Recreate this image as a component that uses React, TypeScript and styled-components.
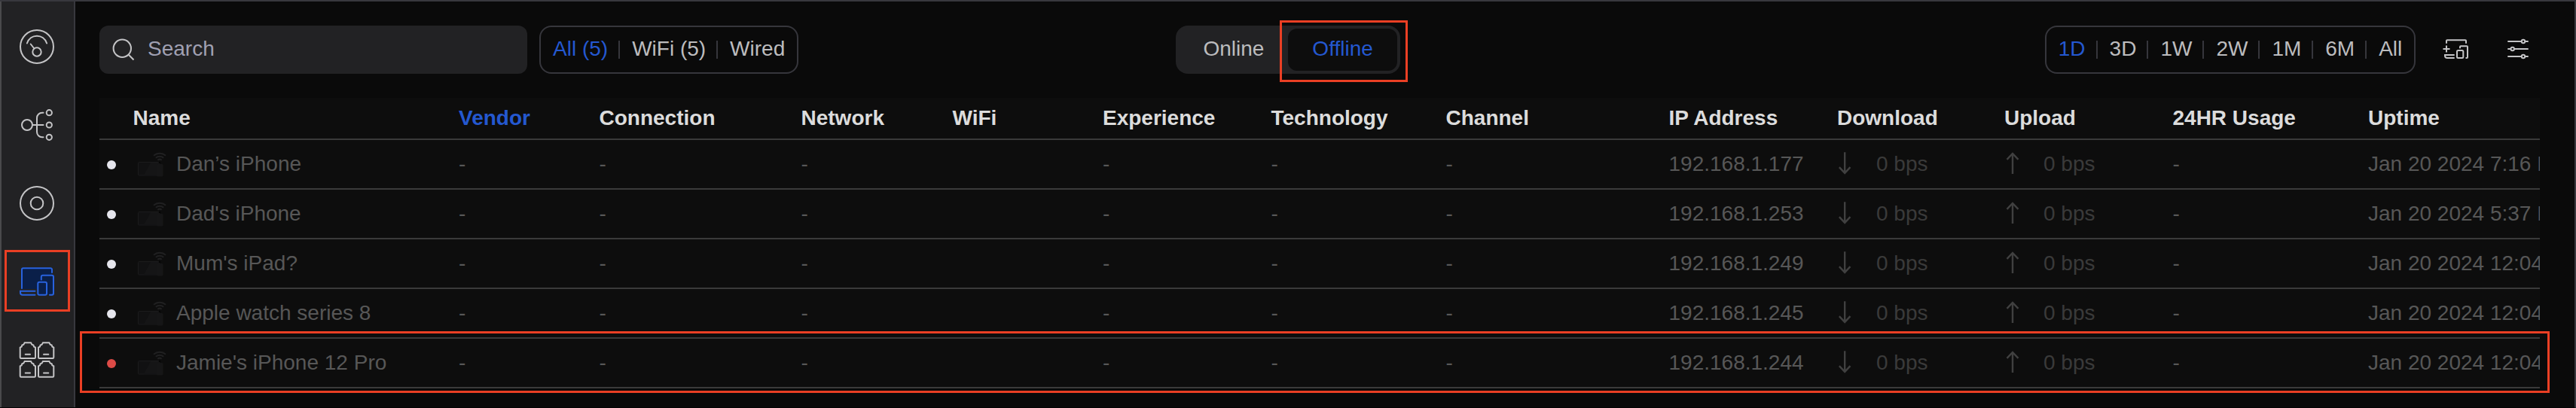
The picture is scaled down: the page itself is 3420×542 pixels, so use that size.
import React from "react";
import styled, { createGlobalStyle, css } from "styled-components";

const GlobalStyle = createGlobalStyle`
  * { box-sizing: border-box; }
  body { margin: 0; background: #0a0a0a; }
`;

const Page = styled.div`
  position: relative;
  display: flex;
  width: 3420px;
  height: 542px;
  overflow: hidden;
  background: #0a0a0a;
  border-top: 2px solid #38383e;
  border-right: 2px solid #38383e;
  border-bottom: 1px solid #040404;
  font-family: "Liberation Sans", Arial, sans-serif;
  font-size: 28px;
  line-height: 32px;
  color: #bcbcbe;
`;

const Sidebar = styled.nav`
  display: flex;
  flex-direction: column;
  align-items: center;
  gap: 56px;
  width: 100px;
  height: 541px;
  margin-top: -2px;
  padding: 36px 2px 0 0;
  flex: none;
  background: #222224;
  border-top: 2px solid #143181;
  border-left: 2px solid #4a4a4c;
  border-right: 2px solid #38383e;
`;

const NavIcon = styled.svg<{ $active?: boolean }>`
  display: block;
  flex: none;
  width: 48px;
  height: 48px;
  fill: none;
  stroke: ${(p) => (p.$active ? "#2862de" : "#c4c4c6")};
  stroke-width: 2;
  stroke-linecap: round;
`;

const Main = styled.main`
  flex: 1;
  min-width: 0;
  padding: 32px 46px 0 32px;
`;

const Toolbar = styled.div`
  display: flex;
  align-items: center;
  height: 64px;
  margin-bottom: 32px;
`;

const SearchBox = styled.div`
  display: flex;
  align-items: center;
  width: 568px;
  height: 64px;
  padding-left: 16px;
  gap: 16px;
  border-radius: 12px;
  background: #222224;
  color: #a0a0b2;
`;

const SearchLabel = styled.span`
  padding-bottom: 2px;
`;

const ToolIcon = styled.svg`
  display: block;
  flex: none;
  fill: none;
  stroke: #c4c4c6;
  stroke-width: 2;
`;

const OptionGroup = styled.div<{ $gapLeft: number }>`
  display: flex;
  align-items: center;
  height: 64px;
  margin-left: ${(p) => p.$gapLeft}px;
  padding: 0 16px;
  border: 2px solid #36363c;
  border-radius: 16px;
`;

const Option = styled.span<{ $active?: boolean }>`
  padding-bottom: 2px;
  white-space: nowrap;
  color: ${(p) => (p.$active ? "#2458d0" : "#bcbcbe")};
`;

const Divider = styled.i`
  width: 2px;
  height: 24px;
  margin: 0 16px 0 14px;
  background: #36363c;
`;

const Segmented = styled.div`
  display: flex;
  height: 64px;
  margin-left: 501.2px;
  padding: 4px;
  border-radius: 16px;
  background: #222224;
`;

const Segment = styled.span<{ $active?: boolean }>`
  padding: 11px 32px 13px;
  border-radius: 12px;
  ${(p) =>
    p.$active &&
    css`
      background: #0d0d0d;
      color: #2458d0;
    `}
`;

const ToolActions = styled.div`
  display: flex;
  align-items: center;
  gap: 48px;
  margin-left: 34px;
`;

const Table = styled.div`
  width: 3240px;
  overflow: hidden;
  background: #0d0d0d;
`;

const columns = css`
  display: grid;
  align-items: center;
  grid-template-columns:
    44.5px 432.5px 186.5px 268px 201px 199.5px 223.5px 232px 296px 223.5px 222px
    223.5px 259.5px 400px;
  white-space: nowrap;
  border-bottom: 2px solid #3a3a3a;
`;

const HeadRow = styled.div`
  ${columns}
  width: 3240px;
  height: 56px;
  font-weight: 700;
  color: #dcdcdc;
`;

const HeadCell = styled.span<{ $sorted?: boolean }>`
  color: ${(p) => (p.$sorted ? "#2458d0" : "inherit")};
`;

const Row = styled.div`
  ${columns}
  width: 3240px;
  height: 66px;
  color: #575757;
`;

const StatusDot = styled.i<{ $blocked?: boolean }>`
  width: 12px;
  height: 12px;
  margin: 2px 0 0 10px;
  border-radius: 50%;
  background: ${(p) => (p.$blocked ? "#dd4b47" : "#e6e6ed")};
`;

const NameCell = styled.div`
  display: flex;
  align-items: center;
  padding-left: 4.5px;
  gap: 13px;
`;

const RateCell = styled.div`
  display: flex;
  align-items: center;
  gap: 30px;
  color: #3a3a3a;
`;

const Highlight = styled.div<{ $x: number; $y: number; $w: number; $h: number }>`
  position: absolute;
  left: ${(p) => p.$x}px;
  top: ${(p) => p.$y - 2}px;
  width: ${(p) => p.$w}px;
  height: ${(p) => p.$h}px;
  border: 3px solid #ea3f24;
`;

const port =
  "M1 7.300L3 6.200L3.600 4.200L5.600 3.400L7 1H15.300L16.700 3.400L18.700 4.200L19.300 6.200L21.300 7.300V20.500a1.200 1.200 0 0 1-1.200 1.200H2.200A1.200 1.200 0 0 1 1 20.500zM8 16.500h6.300";

function DeviceArt() {
  return (
    <svg width="40" height="36" viewBox="0 0 40 36" fill="none">
      <rect x="2.500" y="15.500" width="28" height="17.500" rx="1" fill="#111112" stroke="#1b1b1c" />
      <path d="M19 16h11v16.500H10z" fill="#151516" />
      <rect x="27" y="18" width="8.500" height="16.500" rx="1.500" fill="#161617" />
      <g stroke="#202021" strokeWidth="2">
        <path d="M23 6.800c4.500-4.200 11.500-4.200 16 0M25.800 9.800c3-2.700 7.400-2.700 10.400 0M28.300 12.700c1.600-1.300 3.800-1.300 5.400 0" />
      </g>
      <circle cx="31" cy="16" r="1.200" fill="#060606" />
    </svg>
  );
}

function Arrow({ up }: { up?: boolean }) {
  return (
    <svg width="22" height="32" viewBox="0 0 22 32" fill="none" stroke="#404040" strokeWidth="2.400">
      {up ? (
        <path d="M11 29V2M3.500 9.800L11 2l7.500 7.800" />
      ) : (
        <path d="M10.200 .3v27.500M2.900 20.200l7.300 7.700 7.300-7.700" />
      )}
    </svg>
  );
}

function Options({ items, gapLeft }: { items: string[]; gapLeft: number }) {
  return (
    <OptionGroup $gapLeft={gapLeft}>
      {items.map((label, i) => (
        <React.Fragment key={label}>
          {i > 0 && <Divider />}
          <Option $active={i === 0}>{label}</Option>
        </React.Fragment>
      ))}
    </OptionGroup>
  );
}

const headings = [
  "Name", "Vendor", "Connection", "Network", "WiFi", "Experience", "Technology",
  "Channel", "IP Address", "Download", "Upload", "24HR Usage", "Uptime",
];

const devices = [
  { name: "Dan’s iPhone", ip: "192.168.1.177", uptime: "Jan 20 2024 7:16 PM" },
  { name: "Dad's iPhone", ip: "192.168.1.253", uptime: "Jan 20 2024 5:37 PM" },
  { name: "Mum's iPad?", ip: "192.168.1.249", uptime: "Jan 20 2024 12:04 PM" },
  { name: "Apple watch series 8", ip: "192.168.1.245", uptime: "Jan 20 2024 12:04 PM" },
  { name: "Jamie's iPhone 12 Pro", ip: "192.168.1.244", uptime: "Jan 20 2024 12:04 PM", blocked: true },
];

export default function App() {
  return (
    <Page>
      <GlobalStyle />
      <Sidebar>
        <NavIcon viewBox="0 0 48 48">
          <circle cx="24" cy="24" r="22" />
          <path d="M10.900 19.500c4.500-13 21.700-13 26.200 0M15.700 20.500l4.300 5.500" />
          <circle cx="24" cy="31" r="5.700" />
        </NavIcon>
        <NavIcon viewBox="0 0 48 48">
          <circle cx="11" cy="24" r="7" />
          <path d="M18.500 24H32.500M32.500 7.700H31a7 7 0 0 0-7 7v18.600a7 7 0 0 0 7 7h1.500" />
          <circle cx="40.300" cy="7.700" r="3.600" />
          <circle cx="40.300" cy="24" r="3.600" />
          <circle cx="40.300" cy="40.300" r="3.600" />
        </NavIcon>
        <NavIcon viewBox="0 0 48 48">
          <circle cx="24" cy="24" r="22" />
          <circle cx="24" cy="24" r="8.300" />
        </NavIcon>
        <NavIcon viewBox="0 0 48 48" $active>
          <path d="M4 34V8a2 2 0 0 1 2-2h36a2 2 0 0 1 2 2v8H30v8h-5v10z" fill="#0a1f49" stroke="none" />
          <path d="M30 16h16v25H38V24.500h-8z" fill="#0a1f49" stroke="none" />
          <rect x="25.300" y="24.800" width="11.700" height="16.900" rx="2" fill="#0a1f49" />
          <path d="M4 33V8a1.800 1.800 0 0 1 1.800-1.800h36.400A1.800 1.800 0 0 1 44 8v4M29.800 21.500v-3.700a2 2 0 0 1 2-2H44a2 2 0 0 1 2 2V39.700a2 2 0 0 1-2 2H41M21.500 36.700H2v2a3 3 0 0 0 3 3h16.500" />
        </NavIcon>
        <NavIcon viewBox="0 0 48 48">
          <path d={port} transform="translate(.7 .3)" />
          <path d={port} transform="translate(25 .3)" />
          <path d={port} transform="translate(.7 25)" />
          <path d={port} transform="translate(25 25)" />
        </NavIcon>
      </Sidebar>
      <Main>
        <Toolbar>
          <SearchBox>
            <ToolIcon width="32" height="32" viewBox="0 0 32 32">
              <circle cx="14.300" cy="14.300" r="11.700" />
              <path d="M22.800 22.800l6.700 6.700" />
            </ToolIcon>
            <SearchLabel>Search</SearchLabel>
          </SearchBox>
          <Options gapLeft={16} items={["All (5)", "WiFi (5)", "Wired"]} />
          <Segmented>
            <Segment>Online</Segment>
            <Segment $active>Offline</Segment>
          </Segmented>
          <Options gapLeft={856} items={["1D", "3D", "1W", "2W", "1M", "6M", "All"]} />
          <ToolActions>
            <ToolIcon width="40" height="32" viewBox="0 0 40 32">
              <path d="M7 7.700V4.300a1 1 0 0 1 1-1h24a1 1 0 0 1 1 1V7.700M2.500 15h9M7 10.500v9M17.700 23H5v1a3 3 0 0 0 3 3h9.700M25 14.300v-2a1 1 0 0 1 1-1h8a1 1 0 0 1 1 1V26a1 1 0 0 1-1 1h-1.500" />
              <rect x="21" y="17" width="8.300" height="10" rx="1.500" />
            </ToolIcon>
            <ToolIcon width="32" height="32" viewBox="0 0 32 32">
              <path d="M.3 5h18.400M23.300 5h4.400M.3 15h4.200M9 15h18.700M.3 25h18.400M23.300 25h4.400" />
              <circle cx="21" cy="5" r="2.200" />
              <circle cx="6.700" cy="15" r="2.200" />
              <circle cx="21" cy="25" r="2.200" />
            </ToolIcon>
          </ToolActions>
        </Toolbar>
        <Table>
          <HeadRow>
            <span />
            {headings.map((h) => (
              <HeadCell key={h} $sorted={h === "Vendor"}>{h}</HeadCell>
            ))}
          </HeadRow>
          {devices.map((d) => (
            <Row key={d.name}>
              <StatusDot $blocked={d.blocked} />
              <NameCell>
                <DeviceArt />
                {d.name}
              </NameCell>
              <span>-</span>
              <span>-</span>
              <span>-</span>
              <span />
              <span>-</span>
              <span>-</span>
              <span>-</span>
              <span>{d.ip}</span>
              <RateCell><Arrow />0 bps</RateCell>
              <RateCell><Arrow up />0 bps</RateCell>
              <span>-</span>
              <span>{d.uptime}</span>
            </Row>
          ))}
        </Table>
      </Main>
      <Highlight $x={6} $y={332} $w={87} $h={82} />
      <Highlight $x={1699} $y={27} $w={170} $h={82} />
      <Highlight $x={106} $y={440} $w={3279} $h={82} />
    </Page>
  );
}
